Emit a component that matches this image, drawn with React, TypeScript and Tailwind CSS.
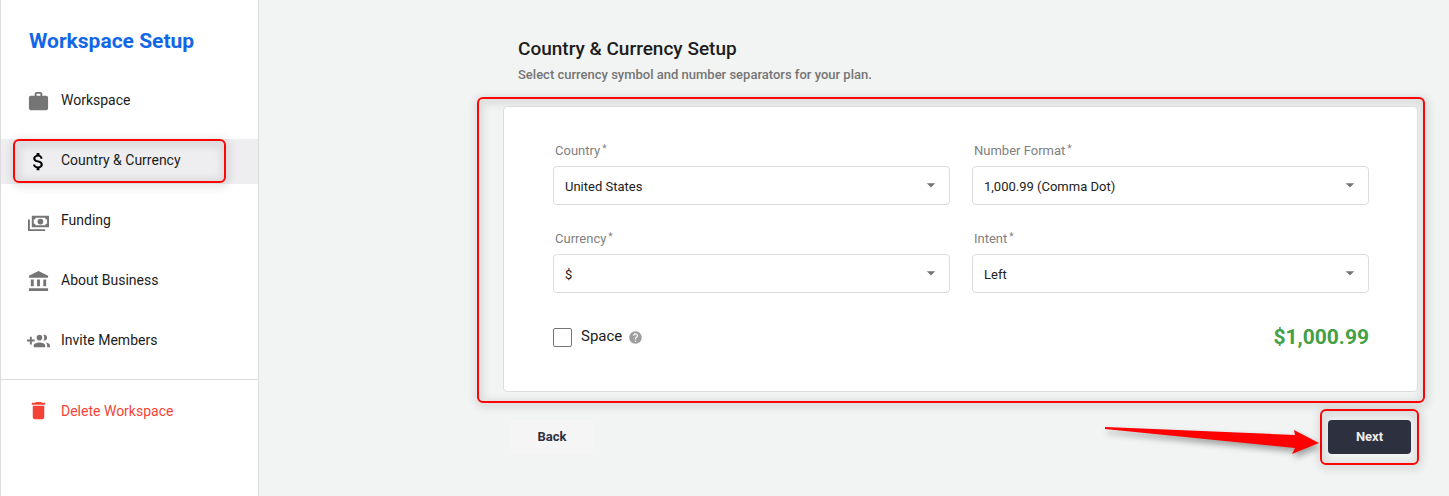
import type { ReactNode } from "react";
import { clsx } from "clsx";
import {
  MdAccountBalance,
  MdArrowDropDown,
  MdAttachMoney,
  MdDelete,
  MdHelp,
  MdWork,
} from "react-icons/md";

interface NavItem {
  label: string;
  icon: ReactNode;
  active?: boolean;
}

interface SelectFieldProps {
  id: string;
  label: string;
  options: string[];
}

function CashIcon() {
  return (
    <svg viewBox="0 0 24 24" fill="currentColor" className="size-[23px]">
      <path d="M5,6H23V18H5V6M14,9A3,3 0 0,1 17,12A3,3 0 0,1 14,15A3,3 0 0,1 11,12A3,3 0 0,1 14,9M9,8A2,2 0 0,1 7,10V14A2,2 0 0,1 9,16H19A2,2 0 0,1 21,14V10A2,2 0 0,1 19,8H9M1,10H3V20H19V22H1V10Z" />
    </svg>
  );
}

function GroupAddIcon() {
  return (
    <svg viewBox="0 0 24 24" fill="currentColor" className="size-[23px]">
      <path d="M8 10H5V7H3v3H0v2h3v3h2v-3h3v-2zm10 1c1.66 0 2.99-1.34 2.99-3S19.66 5 18 5c-.32 0-.63.05-.91.14.57.81.9 1.79.9 2.86s-.34 2.04-.9 2.86c.28.09.59.14.91.14zm-5 0c1.66 0 2.99-1.34 2.99-3S14.66 5 13 5c-1.66 0-3 1.34-3 3s1.34 3 3 3zm6.62 2.16c.83.73 1.38 1.66 1.38 2.84v2h3v-2c0-1.54-2.37-2.49-4.38-2.84zM13 13c-2 0-6 1-6 3v2h12v-2c0-2-4-3-6-3z" />
    </svg>
  );
}

const navItems: NavItem[] = [
  { label: "Workspace", icon: <MdWork className="size-[23px]" /> },
  {
    label: "Country & Currency",
    icon: <MdAttachMoney className="size-[23px]" />,
    active: true,
  },
  { label: "Funding", icon: <CashIcon /> },
  { label: "About Business", icon: <MdAccountBalance className="size-[23px]" /> },
  { label: "Invite Members", icon: <GroupAddIcon /> },
];

// Red callout frame, sits over whatever it marks
function Highlight({ className }: { className: string }) {
  return (
    <div
      aria-hidden="true"
      className={clsx(
        "absolute pointer-events-none rounded-md border-2 border-[#fb0505] drop-shadow-[1px_2px_5px_rgba(0,0,0,0.4)]",
        className
      )}
    />
  );
}

function SelectField({ id, label, options }: SelectFieldProps) {
  return (
    <div>
      <label
        htmlFor={id}
        className="flex items-start gap-0.5 pl-0.5 mb-[7px] text-[13px] leading-4 text-[#808080]"
      >
        {label}
        <span className="text-[10px] leading-3">*</span>
      </label>
      <div className="relative">
        <select
          id={id}
          className="block w-full h-[39px] appearance-none rounded border border-[#dcdcdc] bg-white pt-0.5 pl-[11px] pr-8 text-[13px] text-[#212121]"
        >
          {options.map((option) => (
            <option key={option}>{option}</option>
          ))}
        </select>
        <MdArrowDropDown className="absolute right-[9px] top-[9px] size-5 text-[#757575] pointer-events-none" />
      </div>
    </div>
  );
}

function Sidebar() {
  return (
    <aside className="w-[259px] flex-shrink-0 border-x border-[#dcdcdc] bg-white">
      <h1 className="px-7 pt-[27px] text-[21px] leading-7 font-bold text-[#1267e8]">
        Workspace Setup
      </h1>
      <nav className="flex flex-col gap-[15px] pt-6 pb-[15px] border-b border-[#dcdcdc]">
        {navItems.map((item) => (
          <a
            key={item.label}
            href="#"
            className={clsx(
              "relative flex items-center gap-[11px] h-[45px] pl-[26px] text-sm text-[#1c1c1c]",
              item.active && "bg-[#eeeef0]"
            )}
          >
            {item.active && <Highlight className="left-3 right-8 top-0 bottom-px" />}
            <span className={clsx("relative", item.active ? "text-black" : "text-[#757575]")}>
              {item.icon}
            </span>
            <span className="relative pb-1">{item.label}</span>
          </a>
        ))}
      </nav>
      <button className="flex items-center gap-[11px] mt-2 h-[45px] w-full pl-[26px] text-sm text-[#f44336]">
        <MdDelete className="size-[23px]" />
        Delete Workspace
      </button>
    </aside>
  );
}

export default function App() {
  return (
    <div className="flex min-h-screen bg-[#f2f4f3] font-['Roboto',sans-serif] text-[#1c1c1c]">
      <Sidebar />

      <main className="flex-1 pl-[244px] pr-[31px] pt-9">
        <header className="pl-[15px]">
          <h2 className="text-[19px] leading-[26px] font-medium">
            Country &amp; Currency Setup
          </h2>
          <p className="text-[13px] leading-[26px] font-medium text-[#757575]">
            Select currency symbol and number separators for your plan.
          </p>
        </header>

        <div className="relative mt-[18px]">
          <Highlight className="-left-[26px] -right-[7px] -top-[9px] -bottom-[11px]" />
          <form className="relative rounded border border-[#dcdcdc] bg-white pl-[49px] pr-12 pt-9 pb-[42px]">
            <div className="grid grid-cols-2 gap-x-[22px] gap-y-[26px]">
              <SelectField id="country" label="Country" options={["United States"]} />
              <SelectField
                id="format"
                label="Number Format"
                options={["1,000.99 (Comma Dot)"]}
              />
              <SelectField id="currency" label="Currency" options={["$"]} />
              <SelectField id="intent" label="Intent" options={["Left"]} />
            </div>

            <div className="flex items-center justify-between mt-8">
              <div className="flex items-center">
                <input
                  id="space"
                  type="checkbox"
                  className="size-[19px] appearance-none rounded-xs border border-[#757575] bg-white checked:bg-[#1267e8]"
                />
                <label htmlFor="space" className="ml-[9px] pb-0.5 text-[15px] leading-[22px]">
                  Space
                </label>
                <MdHelp className="ml-1.5 size-[15px] text-[#9e9e9e]" />
              </div>
              <output className="text-[21px] leading-6 font-bold text-[#43a047]">$1,000.99</output>
            </div>
          </form>
        </div>

        <div className="flex items-center justify-between pl-2 pr-[7px] mt-7">
          <button className="h-[34px] w-[82px] rounded bg-[#f5f5f5] text-[13px] font-bold text-[#2d303e]">
            Back
          </button>
          <div className="relative">
            <Highlight className="-inset-x-2 -inset-y-[11px]" />
            {/* Pointer to the next step */}
            <svg
              viewBox="0 0 216 40"
              fill="#fe0000"
              aria-hidden="true"
              className="absolute right-[91px] top-0 h-10 w-[216px] overflow-visible pointer-events-none drop-shadow-[2px_4px_3px_rgba(0,0,0,0.35)]"
            >
              <path d="M1 7L191 15L190 10L215 23L188 34L191 28L1 9Z" />
            </svg>
            <button className="relative block h-[34px] w-[83px] rounded bg-[#2d303e] text-[13px] font-bold text-[#eeeeee]">
              Next
            </button>
          </div>
        </div>
      </main>
    </div>
  );
}
